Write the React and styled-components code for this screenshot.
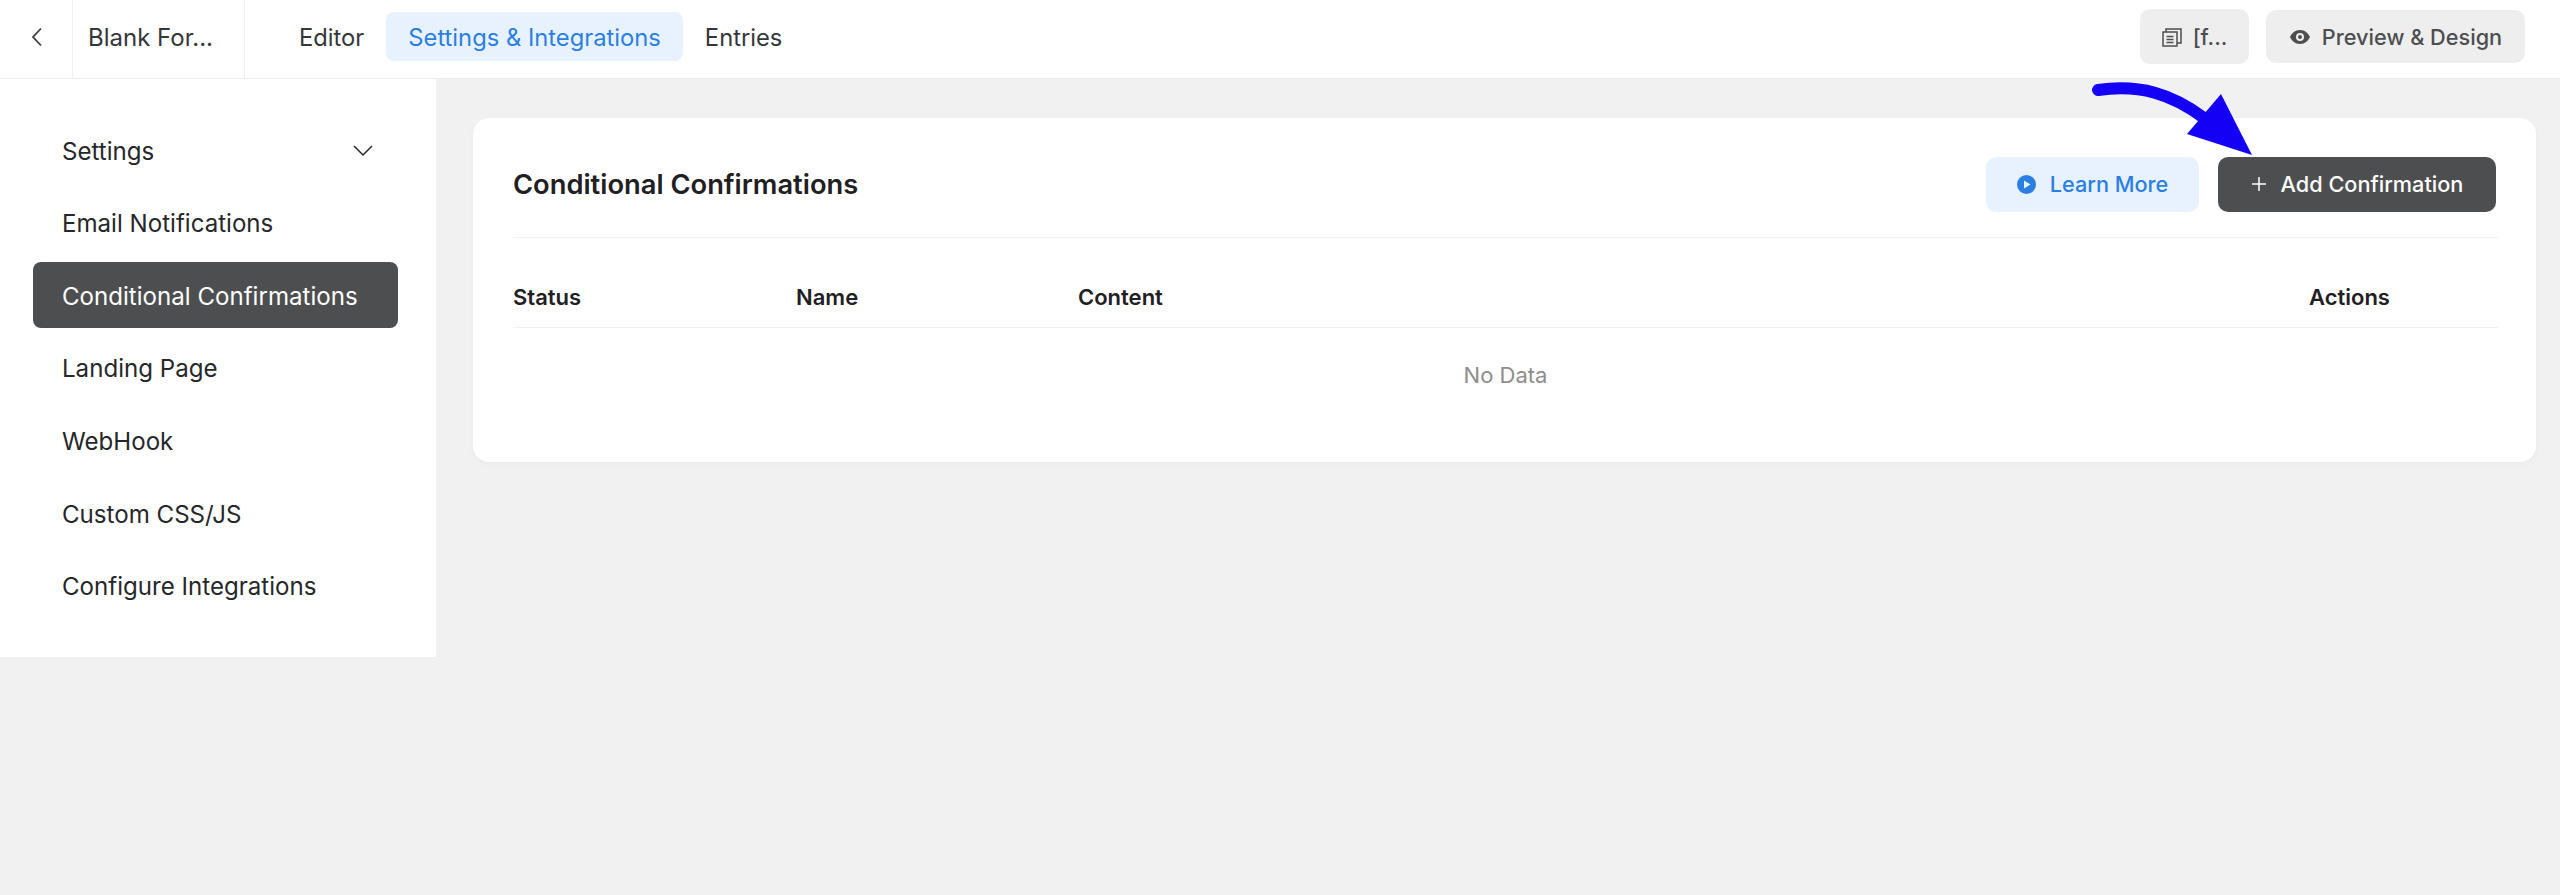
import React from 'react';
import styled, { createGlobalStyle } from 'styled-components';

const GlobalStyle = createGlobalStyle`
  html, body { margin: 0; padding: 0; background: #f1f1f1; }
  body { font-family: Inter, "Liberation Sans", sans-serif; color: #1f2023; }
  * { box-sizing: border-box; }
`;

const Page = styled.div`
  position: relative;
  width: 2560px;
  height: 895px;
  overflow: hidden;
  background: #f1f1f1;
`;

const TopBar = styled.header`
  display: flex;
  align-items: stretch;
  height: 79px;
  background: #fff;
  border-bottom: 1px solid #ececec;
  padding-right: 35px;
`;

const BackCell = styled.div`
  display: flex;
  align-items: center;
  width: 73px;
  padding: 0 0 5px 30px;
  border-right: 1px solid #f0f0f0;
  color: #3a3b3d;
`;

const FormName = styled.div`
  display: flex;
  align-items: center;
  width: 172px;
  padding: 0 0 3px 15px;
  border-right: 1px solid #f0f0f0;
  font-size: 24px;
  color: #35363a;
`;

const Tabs = styled.nav`
  display: flex;
  align-items: center;
  margin-left: 32px;
  padding-bottom: 6px;
`;

const Tab = styled.a`
  display: flex;
  align-items: center;
  height: 49px;
  padding: 2px 22px 0;
  border-radius: 8px;
  font-size: 23.75px;
  color: ${p => (p.$active ? '#2b7fe2' : '#35363a')};
  background: ${p => (p.$active ? '#e8f2fe' : 'transparent')};
`;

const TopActions = styled.div`
  display: flex;
  align-items: center;
  gap: 17px;
  margin-left: auto;
  padding-bottom: 5px;
`;

const GreyButton = styled.button`
  display: flex;
  align-items: center;
  justify-content: center;
  gap: 11px;
  width: ${p => p.$w}px;
  height: ${p => p.$h}px;
  padding: 1px 0 0;
  border: 0;
  border-radius: 10px;
  background: #eeeeee;
  font: 500 21.7px Inter, "Liberation Sans", sans-serif;
  color: #4d4e50;
`;

const Body = styled.div`
  display: flex;
  align-items: flex-start;
`;

const Sidebar = styled.aside`
  display: flex;
  flex-direction: column;
  gap: 6.67px;
  width: 436px;
  height: 578px;
  padding: 38px 38px 0 33px;
  background: #fff;
`;

const MenuItem = styled.a`
  display: flex;
  align-items: center;
  justify-content: space-between;
  flex: 0 0 66px;
  padding: 2px 25px 0 29px;
  border-radius: 8px;
  font-size: 24.1px;
  color: ${p => (p.$active ? '#fff' : '#26272a')};
  background: ${p => (p.$active ? '#4d4e50' : 'transparent')};
`;

const Card = styled.section`
  flex: 1;
  height: 344px;
  margin: 39px 24px 0 37px;
  padding: 0 38px 0 40px;
  background: #fff;
  border-radius: 16px;
  box-shadow: 0 2px 6px rgba(0, 0, 0, 0.03);
`;

const CardHead = styled.div`
  display: flex;
  align-items: center;
  justify-content: space-between;
  height: 120px;
  padding: 13px 2px 0 0;
  border-bottom: 1px solid #f1f1f1;
`;

const Title = styled.h2`
  margin: 0;
  font-size: 27.3px;
  font-weight: 600;
  color: #1f2023;
`;

const CardActions = styled.div`
  display: flex;
  gap: 19px;
`;

const ActionButton = styled.button`
  display: flex;
  align-items: center;
  justify-content: center;
  gap: 14px;
  width: ${p => p.$w}px;
  height: 55px;
  border: 0;
  border-radius: 10px;
  font: 500 21.7px Inter, "Liberation Sans", sans-serif;
  color: ${p => (p.$primary ? '#fff' : '#2b7fe2')};
  background: ${p => (p.$primary ? '#4d4e50' : '#e8f2fe')};
`;

const HeadRow = styled.div`
  display: grid;
  grid-template-columns: 283px 282px 1fr 189px;
  align-items: center;
  height: 90px;
  padding-top: 28px;
  border-bottom: 1px solid #f1f1f1;
`;

const HeadCell = styled.div`
  font-size: 22px;
  font-weight: 600;
  color: #1f2023;
`;

const EmptyRow = styled.div`
  display: flex;
  align-items: center;
  justify-content: center;
  height: 94px;
  font-size: 22px;
  color: #8d8d8d;
`;

const ArrowMark = styled.svg`
  position: absolute;
  left: 2080px;
  top: 70px;
`;

const menu = ['Email Notifications', 'Conditional Confirmations', 'Landing Page', 'WebHook', 'Custom CSS/JS', 'Configure Integrations'];

const App = () => {
    return (
        <Page>
            <GlobalStyle />
            <TopBar>
                <BackCell>
                    <svg width="14" height="20" viewBox="0 0 14 20" fill="none" stroke="currentColor" strokeWidth="1.800">
                        <path d="M11 1.500 3 10l8 8.500" />
                    </svg>
                </BackCell>
                <FormName>Blank For...</FormName>
                <Tabs>
                    <Tab>Editor</Tab>
                    <Tab $active>Settings &amp; Integrations</Tab>
                    <Tab>Entries</Tab>
                </Tabs>
                <TopActions>
                    <GreyButton $w={109} $h={55}>
                        <svg width="20" height="20" viewBox="0 0 20 20" fill="none" stroke="currentColor" strokeWidth="1.500">
                            <rect x="1" y="5" width="14" height="14" />
                            <path d="M4 5V2h12M16 2h3v14h-4M4.500 9.500h7M4.500 12.500h7M4.500 15.500h7" />
                        </svg>
                        [f...
                    </GreyButton>
                    <GreyButton $w={259} $h={53}>
                        <svg width="22" height="16" viewBox="0 0 22 16">
                            <path fill="currentColor" fillRule="evenodd" d="M11 1c5 0 8.500 3.500 10 7-1.500 3.500-5 7-10 7S2.500 11.500 1 8c1.500-3.500 5-7 10-7Zm0 3a4 4 0 1 0 0 8 4 4 0 0 0 0-8Zm0 2a2 2 0 1 1 0 4 2 2 0 0 1 0-4Z" />
                        </svg>
                        Preview &amp; Design
                    </GreyButton>
                </TopActions>
            </TopBar>
            <Body>
                <Sidebar>
                    <MenuItem>
                        Settings
                        <svg width="20" height="12" viewBox="0 0 20 12" fill="none" stroke="#26272a" strokeWidth="1.500">
                            <path d="m1 1 9 9 9-9" />
                        </svg>
                    </MenuItem>
                    {menu.map(item => (
                        <MenuItem key={item} $active={item === 'Conditional Confirmations'}>{item}</MenuItem>
                    ))}
                </Sidebar>
                <Card>
                    <CardHead>
                        <Title>Conditional Confirmations</Title>
                        <CardActions>
                            <ActionButton $w={213}>
                                <svg width="19" height="19" viewBox="0 0 19 19">
                                    <path fill="currentColor" fillRule="evenodd" d="M9.500 0a9.500 9.500 0 1 1 0 19 9.500 9.500 0 0 1 0-19ZM7 5.500v8l6.500-4Z" />
                                </svg>
                                Learn More
                            </ActionButton>
                            <ActionButton $w={278} $primary>
                                <svg width="16" height="16" viewBox="0 0 16 16" stroke="currentColor" strokeWidth="1.500">
                                    <path d="M8 1v14M1 8h14" />
                                </svg>
                                Add Confirmation
                            </ActionButton>
                        </CardActions>
                    </CardHead>
                    <HeadRow>
                        <HeadCell>Status</HeadCell>
                        <HeadCell>Name</HeadCell>
                        <HeadCell>Content</HeadCell>
                        <HeadCell>Actions</HeadCell>
                    </HeadRow>
                    <EmptyRow>No Data</EmptyRow>
                </Card>
            </Body>
            <ArrowMark width="180" height="90" viewBox="0 0 180 90">
                <path d="M18 20C60 14 92 24 124 48" fill="none" stroke="#1400f5" strokeWidth="12" strokeLinecap="round" />
                <path d="M172 85 141 24 107 64Z" fill="#1400f5" />
            </ArrowMark>
        </Page>
    )
}

export default App
